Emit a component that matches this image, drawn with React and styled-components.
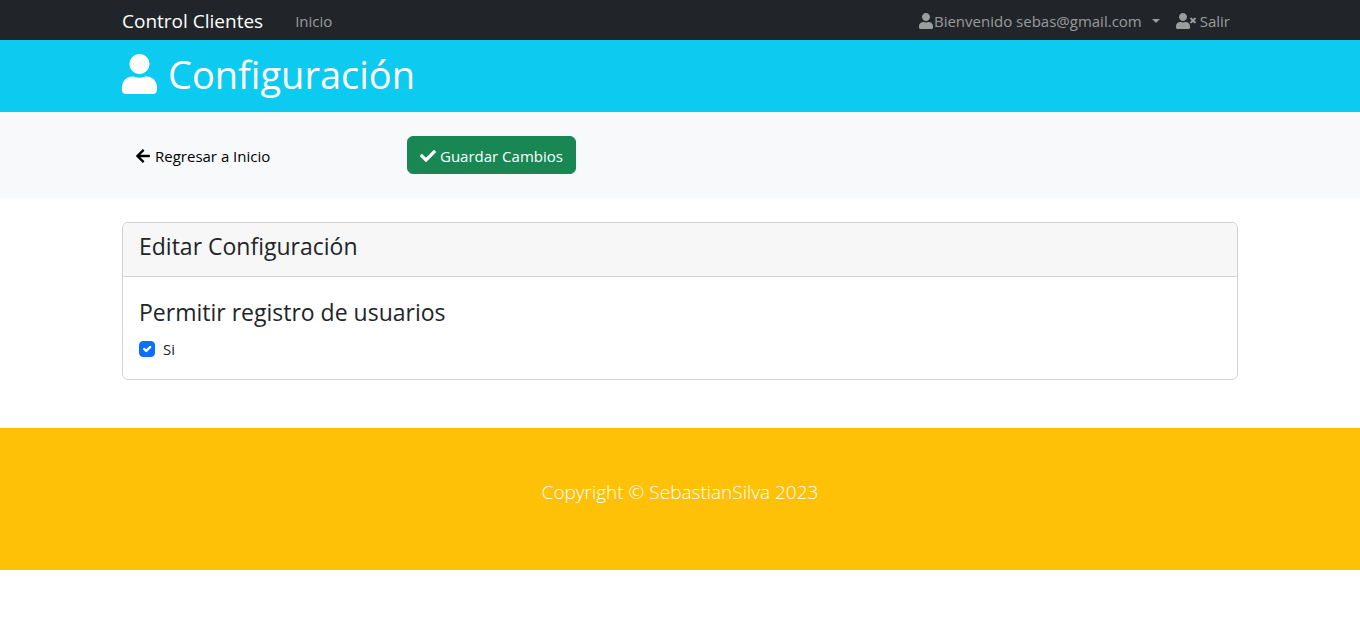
import React from "react";
import styled, { createGlobalStyle, css } from "styled-components";
import { FaUser, FaUserTimes, FaArrowLeft, FaCheck } from "react-icons/fa";

const GlobalStyle = createGlobalStyle`
  *, *::before, *::after { box-sizing: border-box; }
  body {
    margin: 0;
    background: #fff;
    color: #212529;
    font-family: "Segoe UI", "Open Sans", "Noto Sans", sans-serif;
    font-size: 15px;
    line-height: 24px;
  }
`;

const Container = styled.div`
  width: 100%;
  max-width: 1140px;
  margin: 0 auto;
  padding: 0 12px;
`;

const Navbar = styled.nav`
  background: #212529;
`;

const NavInner = styled(Container)`
  display: flex;
  align-items: center;
`;

const Brand = styled.a`
  padding: 6px 0 4px;
  margin-right: 24px;
  color: #fff;
  font-size: 19px;
  line-height: 30px;
  text-decoration: none;
`;

const NavGroup = styled.div`
  display: flex;
  margin-left: ${(p) => (p.$end ? "auto" : "0")};
`;

const navItem = css`
  display: flex;
  align-items: center;
  gap: ${(p) => p.$gap || 0}px;
  padding: 9px 8px 7px;
  border: 0;
  background: none;
  color: rgba(255, 255, 255, 0.55);
  font: inherit;
  text-decoration: none;
  cursor: pointer;
`;

const NavLink = styled.a`
  ${navItem}
`;

const NavButton = styled.button`
  ${navItem}
`;

const Caret = styled.span`
  margin-left: 10px;
  border-top: 4px solid;
  border-left: 4px solid transparent;
  border-right: 4px solid transparent;
`;

const Header = styled.header`
  padding: 10px 0 14px;
  background: #0dcaf0;
  color: #fff;
`;

const Title = styled.h1`
  display: flex;
  align-items: center;
  gap: 11px;
  margin: 0;
  font-size: 38px;
  font-weight: 400;
  line-height: 48px;

  svg {
    width: 35px;
    height: 40px;
  }
`;

const Actions = styled.section`
  padding: 24px 0;
  background: #f8f9fa;
`;

const ActionRow = styled(Container)`
  display: grid;
  grid-template-columns: repeat(4, 1fr);
  column-gap: 24px;
`;

const buttonLook = css`
  display: inline-flex;
  align-items: center;
  justify-self: start;
  gap: 4px;
  padding: 7px 12px 5px;
  border: 1px solid transparent;
  border-radius: 6px;
  font: inherit;
  text-decoration: none;
  cursor: pointer;
`;

const BackLink = styled.a`
  ${buttonLook}
  color: #000;
`;

const SaveButton = styled.button`
  ${buttonLook}
  background: #198754;
  border-color: #198754;
  color: #fff;
`;

const Card = styled.section`
  margin-top: 24px;
  border: 1px solid #d2d2d2;
  border-radius: 6px;
  overflow: hidden;
`;

const CardHeader = styled.div`
  padding: 9px 16px 15px;
  border-bottom: 1px solid #d2d2d2;
  background: #f7f7f7;
`;

const CardBody = styled.div`
  padding: 21px 16px 18px;
`;

const Heading = styled.h4`
  margin: 0;
  font-size: 23px;
  font-weight: 400;
  line-height: 29px;
`;

const Check = styled.label`
  display: flex;
  align-items: center;
  gap: 8px;
  margin-top: 10px;
`;

const Tick = styled.span`
  display: grid;
  width: 16px;
  height: 16px;

  > * {
    grid-area: 1 / 1;
  }

  svg {
    width: 16px;
    height: 16px;
    pointer-events: none;
    visibility: hidden;
  }

  input:checked + svg {
    visibility: visible;
  }
`;

const CheckInput = styled.input`
  appearance: none;
  width: 16px;
  height: 16px;
  margin: 0;
  border: 1px solid #dee2e6;
  border-radius: 4px;

  &:checked {
    border-color: #0d6efd;
    background: #0d6efd;
  }
`;

const Footer = styled.footer`
  margin-top: 48px;
  padding: 49px 0 63px;
  background: #ffc107;
  color: #fff;
  font-size: 19px;
  font-weight: 300;
  line-height: 30px;
  text-align: center;
`;

export default function App() {
  return (
    <>
      <GlobalStyle />
      <Navbar>
        <NavInner>
          <Brand href="#">Control Clientes</Brand>
          <NavGroup>
            <NavLink href="#">Inicio</NavLink>
          </NavGroup>
          <NavGroup $end>
            <NavButton type="button">
              <FaUser size={16} />
              Bienvenido sebas@gmail.com
              <Caret />
            </NavButton>
            <NavLink href="#" $gap={4}>
              <FaUserTimes size={20} />
              Salir
            </NavLink>
          </NavGroup>
        </NavInner>
      </Navbar>

      <Header>
        <Container>
          <Title>
            <FaUser />
            Configuración
          </Title>
        </Container>
      </Header>

      <form onSubmit={(e) => e.preventDefault()}>
        <Actions>
          <ActionRow>
            <BackLink href="#">
              <FaArrowLeft size={16} />
              Regresar a Inicio
            </BackLink>
            <SaveButton type="submit">
              <FaCheck size={16} />
              Guardar Cambios
            </SaveButton>
          </ActionRow>
        </Actions>

        <Container>
          <Card>
            <CardHeader>
              <Heading>Editar Configuración</Heading>
            </CardHeader>
            <CardBody>
              <Heading>Permitir registro de usuarios</Heading>
              <Check>
                <Tick>
                  <CheckInput type="checkbox" defaultChecked />
                  <svg viewBox="0 0 20 20" fill="none" stroke="#fff" strokeWidth="3" strokeLinecap="round" strokeLinejoin="round">
                    <path d="m6.5 10 2.5 2.5 5-5" />
                  </svg>
                </Tick>
                Si
              </Check>
            </CardBody>
          </Card>
        </Container>
      </form>

      <Footer>
        <Container>Copyright © SebastianSilva 2023</Container>
      </Footer>
    </>
  );
}
